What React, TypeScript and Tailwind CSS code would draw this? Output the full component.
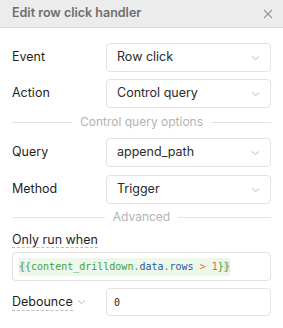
import React from "react";

const Chevron = () => (
  <svg width="9" height="6" viewBox="0 0 9 6" className="text-[#b9b9b9]">
    <path d="M1 1.5l3.5 3 3.5-3" fill="none" stroke="currentColor" strokeWidth="1" />
  </svg>
);

const SelectRow = ({ label, value }: { label: string; value: string }) => (
  <div className="flex items-center">
    <div className="w-[94px] text-[12.5px] text-[#1f1f1f]">{label}</div>
    <div className="flex h-[29px] flex-1 items-center justify-between rounded-[4px] border border-[#e2e2e2] bg-white pl-[10px] pr-[10px]">
      <span className="text-[12.5px] text-[#2b2b2b]">{value}</span>
      <Chevron />
    </div>
  </div>
);

const Divider = ({ label }: { label: string }) => (
  <div className="flex h-[18px] items-center gap-2">
    <div className="h-px flex-1 bg-[#e4e4e4]" />
    <span className="text-[12px] leading-[18px] text-[#b3b3b3]">{label}</span>
    <div className="h-px flex-1 bg-[#e4e4e4]" />
  </div>
);

export default function App() {
  return (
    <div className="h-[328px] w-[283px] bg-white font-['Inter',sans-serif]">
      <div className="flex h-[28px] items-center justify-between border-b border-[#dcdcdc] bg-[#ececec] pl-3 pr-[10px]">
        <span className="text-[12.5px] font-semibold text-[#6e6e6e]">Edit row click handler</span>
        <svg width="10" height="10" viewBox="0 0 10 10">
          <path d="M1 1l8 8M9 1l-8 8" stroke="#9a9a9a" strokeWidth="1.2" />
        </svg>
      </div>

      <div className="flex flex-col px-3 pt-[15px]">
        <SelectRow label="Event" value="Row click" />
        <div className="h-[7px]" />
        <SelectRow label="Action" value="Control query" />
        <div className="mt-[5px]">
          <Divider label="Control query options" />
        </div>
        <div className="h-[7px]" />
        <SelectRow label="Query" value="append_path" />
        <div className="h-[8px]" />
        <SelectRow label="Method" value="Trigger" />
        <div className="mt-[4px]">
          <Divider label="Advanced" />
        </div>
        <div className="mt-[6px] flex h-[16px]">
          <span className="border-b border-dashed border-[#bdbdbd] text-[12.5px] leading-[15px] text-[#1f1f1f]">
            Only run when
          </span>
        </div>
        <div className="mt-[4px] flex h-[29px] items-center rounded-[4px] border border-[#e2e2e2] bg-white px-[6px] font-['DejaVu_Sans_Mono',monospace] text-[10px]">
          <span className="bg-[#eef8ea] leading-[18px]">
            <span className="bg-[#e6e6e6] text-[#3f9f3f]">{"{"}</span>
            <span className="text-[#3f9f3f]">{"{content_drilldown."}</span>
            <span className="text-[#2c57a6]">data</span>
            <span className="text-[#3f9f3f]">.</span>
            <span className="text-[#2c57a6]">rows</span>
            <span className="text-[#f0643a]">{" > 1"}</span>
            <span className="text-[#3f9f3f]">{"}"}</span>
            <span className="bg-[#e6e6e6] text-[#3f9f3f]">{"}"}</span>
          </span>
        </div>
        <div className="mt-[7px] flex items-center">
          <div className="flex w-[94px] items-center gap-[4px]">
            <span className="border-b border-dashed border-[#bdbdbd] text-[12.5px] leading-[16px] text-[#1f1f1f]">Debounce</span>
            <Chevron />
          </div>
          <div className="flex h-[28px] flex-1 items-center rounded-[4px] border border-[#e2e2e2] bg-white pl-[7px] font-['DejaVu_Sans_Mono',monospace] text-[10px] text-[#2b2b2b]">
            0
          </div>
        </div>
      </div>
    </div>
  );
}
